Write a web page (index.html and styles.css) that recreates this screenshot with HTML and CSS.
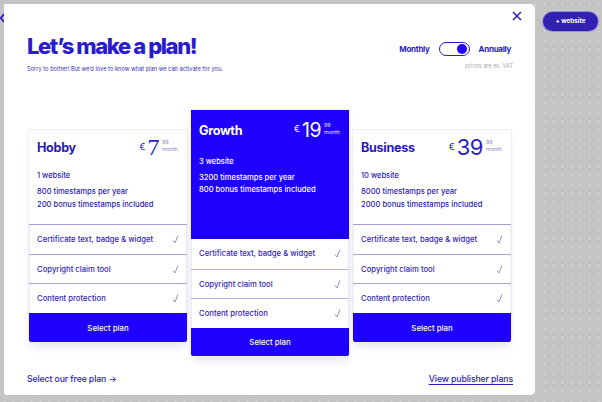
FILE: index.html
```html
<!DOCTYPE html>
<html lang="en">
<head>
<meta charset="utf-8">
<title>Plans</title>
<link rel="stylesheet" href="styles.css">
</head>
<body>
<div class="peek"><svg width="4" height="10" viewBox="0 0 4 10"><path d="M4 1L0.8 5L4 9" stroke="#2a1dbd" stroke-width="1.8" fill="none"/></svg></div>
<main class="modal">
  <button class="close" aria-label="Close">
    <svg width="10" height="10" viewBox="0 0 10 10"><path d="M1 1L9 9M9 1L1 9" stroke="#2a1dbd" stroke-width="1.5" fill="none"/></svg>
  </button>
  <header class="head">
    <div class="intro">
      <h1 class="title">Let’s make a plan!</h1>
      <p class="sub">Sorry to bother! But we’d love to know what plan we can activate for you.</p>
    </div>
    <div class="billing">
      <div class="switch-row">
        <span class="lbl">Monthly</span>
        <span class="switch"><span class="knob"></span></span>
        <span class="lbl">Annually</span>
      </div>
      <p class="vat">prices are ex. VAT</p>
    </div>
  </header>

  <section class="plans">
    <article class="card side">
      <div class="card-head">
        <div class="top">
          <h2 class="name">Hobby</h2>
          <div class="price"><span class="cur">€</span><span class="num serif">7</span><span class="cents"><span>99</span><span>month</span></span></div>
        </div>
        <p class="sites">1 website</p>
        <p class="line">800 timestamps per year</p>
        <p class="line">200 bonus timestamps included</p>
      </div>
      <ul class="feats">
        <li>Certificate text, badge &amp; widget<svg class="chk" viewBox="0 0 7 9"><path d="M1 5.5L3 8L6 0.5"/></svg></li>
        <li>Copyright claim tool<svg class="chk" viewBox="0 0 7 9"><path d="M1 5.5L3 8L6 0.5"/></svg></li>
        <li>Content protection<svg class="chk" viewBox="0 0 7 9"><path d="M1 5.5L3 8L6 0.5"/></svg></li>
      </ul>
      <button class="select">Select plan</button>
    </article>

    <article class="card featured">
      <div class="card-head">
        <div class="top">
          <h2 class="name">Growth</h2>
          <div class="price"><span class="cur">€</span><span class="num">19</span><span class="cents"><span>99</span><span>month</span></span></div>
        </div>
        <p class="sites">3 website</p>
        <p class="line">3200 timestamps per year</p>
        <p class="line">800 bonus timestamps included</p>
      </div>
      <ul class="feats">
        <li>Certificate text, badge &amp; widget<svg class="chk" viewBox="0 0 7 9"><path d="M1 5.5L3 8L6 0.5"/></svg></li>
        <li>Copyright claim tool<svg class="chk" viewBox="0 0 7 9"><path d="M1 5.5L3 8L6 0.5"/></svg></li>
        <li>Content protection<svg class="chk" viewBox="0 0 7 9"><path d="M1 5.5L3 8L6 0.5"/></svg></li>
      </ul>
      <button class="select">Select plan</button>
    </article>

    <article class="card side">
      <div class="card-head">
        <div class="top">
          <h2 class="name">Business</h2>
          <div class="price"><span class="cur">€</span><span class="num">39</span><span class="cents"><span>99</span><span>month</span></span></div>
        </div>
        <p class="sites">10 website</p>
        <p class="line">8000 timestamps per year</p>
        <p class="line">2000 bonus timestamps included</p>
      </div>
      <ul class="feats">
        <li>Certificate text, badge &amp; widget<svg class="chk" viewBox="0 0 7 9"><path d="M1 5.5L3 8L6 0.5"/></svg></li>
        <li>Copyright claim tool<svg class="chk" viewBox="0 0 7 9"><path d="M1 5.5L3 8L6 0.5"/></svg></li>
        <li>Content protection<svg class="chk" viewBox="0 0 7 9"><path d="M1 5.5L3 8L6 0.5"/></svg></li>
      </ul>
      <button class="select">Select plan</button>
    </article>
  </section>

  <footer class="foot">
    <a class="free" href="#">Select our free plan →</a>
    <a class="pub" href="#">View publisher plans</a>
  </footer>
</main>
<aside class="aside">
  <button class="add">+ website</button>
</aside>
</body>
</html>
```

FILE: styles.css
```css
* { box-sizing: border-box; margin: 0; padding: 0; }
html, body { width: 602px; height: 402px; overflow: hidden; }
body {
  background-color: #c4c4c4;
  background-image: radial-gradient(circle, #dedede 0.7px, transparent 1.1px);
  background-size: 9px 9px;
  font-family: Inter, "Noto Sans", sans-serif;
  color: #2d20b6;
  display: flex;
  align-items: flex-start;
  padding-top: 4px;
}
button { font-family: inherit; border: 0; background: none; cursor: pointer; }
a { color: inherit; text-decoration: none; }
ul { list-style: none; }

.peek { width: 4px; overflow: hidden; padding-top: 9px; }
.peek svg { display: block; }

.modal {
  position: relative;
  width: 531px;
  height: 391px;
  background: #fff;
  border-radius: 3px 5px 5px 3px;
  padding: 0 24px 0 25px;
  display: flex;
  flex-direction: column;
}
.close { position: absolute; top: 7px; right: 13px; width: 10px; height: 10px; display: block; }
.close svg { display: block; }

.head { display: flex; justify-content: space-between; align-items: flex-start; }
.intro { padding-top: 29px; margin-left: -2px; }
.title { font-size: 22px; line-height: 26px; font-weight: 800; letter-spacing: -1.4px; color: #2a1ad0; }
.sub { margin-top: 6px; font-size: 5.7px; line-height: 8px; color: #3a2fb8; }

.billing { padding-top: 38px; display: flex; flex-direction: column; align-items: flex-end; }
.switch-row { display: flex; align-items: center; gap: 9px; height: 14px; }
.lbl { font-size: 8px; font-weight: 700; letter-spacing: -0.3px; color: #2a1dbd; }
.switch {
  width: 31px; height: 14px; border: 1.5px solid #2a1dbd; border-radius: 7px;
  display: flex; justify-content: flex-end; align-items: center; padding-right: 2px;
}
.knob { width: 10px; height: 10px; border-radius: 50%; background: #1f00ff; }
.vat { margin-top: 7px; font-size: 5.6px; line-height: 7px; color: #a9a9b8; margin-right: -2px; }

.plans { display: flex; gap: 4px; align-items: flex-start; margin-top: 37px; }
.card {
  width: 158px;
  background: #fff;
  box-shadow: 0 0 0 1px #efeff6, 0 6px 8px -2px rgba(90, 90, 170, 0.18);
  border-radius: 0 0 3px 3px;
}
.side { margin-top: 20px; }
.card-head { padding: 7px 9px 0 8px; height: 94px; }
.top { display: flex; justify-content: space-between; align-items: center; height: 21px; }
.name { font-size: 12.6px; font-weight: 700; letter-spacing: -0.3px; color: #2a1ab8; }
.price { display: flex; align-items: flex-start; height: 21px; color: #2a1dbd; }
.cur { font-size: 9px; line-height: 9px; margin-top: 5px; margin-right: 2px; }
.num { font-size: 22px; line-height: 21px; font-weight: 400; letter-spacing: -0.6px; }
.num.serif { font-family: "Liberation Serif", serif; font-size: 24px; }
.cents { display: flex; flex-direction: column; font-size: 5.4px; line-height: 6.5px; margin-left: 3px; margin-top: 2px; color: #8b86c6; }
.sites { margin-top: 13px; font-size: 7.5px; line-height: 10px; font-weight: 500; color: #2a1ab0; }
.line { font-size: 7.6px; line-height: 13px; font-weight: 500; color: #2a1ab0; }
.sites + .line { margin-top: 4px; }

.feats li {
  height: 29.7px;
  border-top: 1px solid #a5a2d4;
  display: flex; justify-content: space-between; align-items: center;
  padding: 0 8px 0 8px;
  font-size: 7.7px;
  font-weight: 500;
  color: #3325b5;
  box-shadow: inset 1px 0 0 #ececf5, inset -1px 0 0 #ececf5;
}
.chk { width: 7px; height: 9px; fill: none; stroke: #928fc0; stroke-width: 1; }

.select {
  display: block; width: 100%; height: 29px;
  background: #1f00ff; color: #fff;
  font-size: 7.8px; font-weight: 500;
  border-radius: 0 0 2px 2px;
}

.featured { color: #fff; }
.featured .card-head { background: #1f00fa; height: 129px; padding: 10px 9px 0 8px; }
.featured .name, .featured .price, .featured .sites, .featured .line { color: #fff; }
.featured .num { font-size: 19.5px; }
.featured .cur { margin-top: 4px; }
.featured .cents { color: #e4e0ff; }
.featured .sites { margin-top: 16px; }
.featured .line { line-height: 12px; }
.featured .sites + .line { margin-top: 5px; }
.featured .feats li { border-top-color: #b3b0dc; }
.featured .feats li:first-child { border-top: 0; }
.featured .select { height: 28px; }

.foot { display: flex; justify-content: space-between; margin-top: 17px; margin-left: -2px; margin-right: -2px; }
.free, .pub { font-size: 8.7px; line-height: 12px; font-weight: 500; color: #2a1ab8; letter-spacing: -0.1px; }
.pub { text-decoration: underline; text-underline-offset: 1.5px; }

.aside { padding: 3px 0 0 8px; }
.add {
  width: 55px; height: 19px; border-radius: 10px;
  background: #3220b0; color: #fff;
  font-size: 6.3px; font-weight: 700;
  box-shadow: 0 0 0 1px #9890d8;
}
```
